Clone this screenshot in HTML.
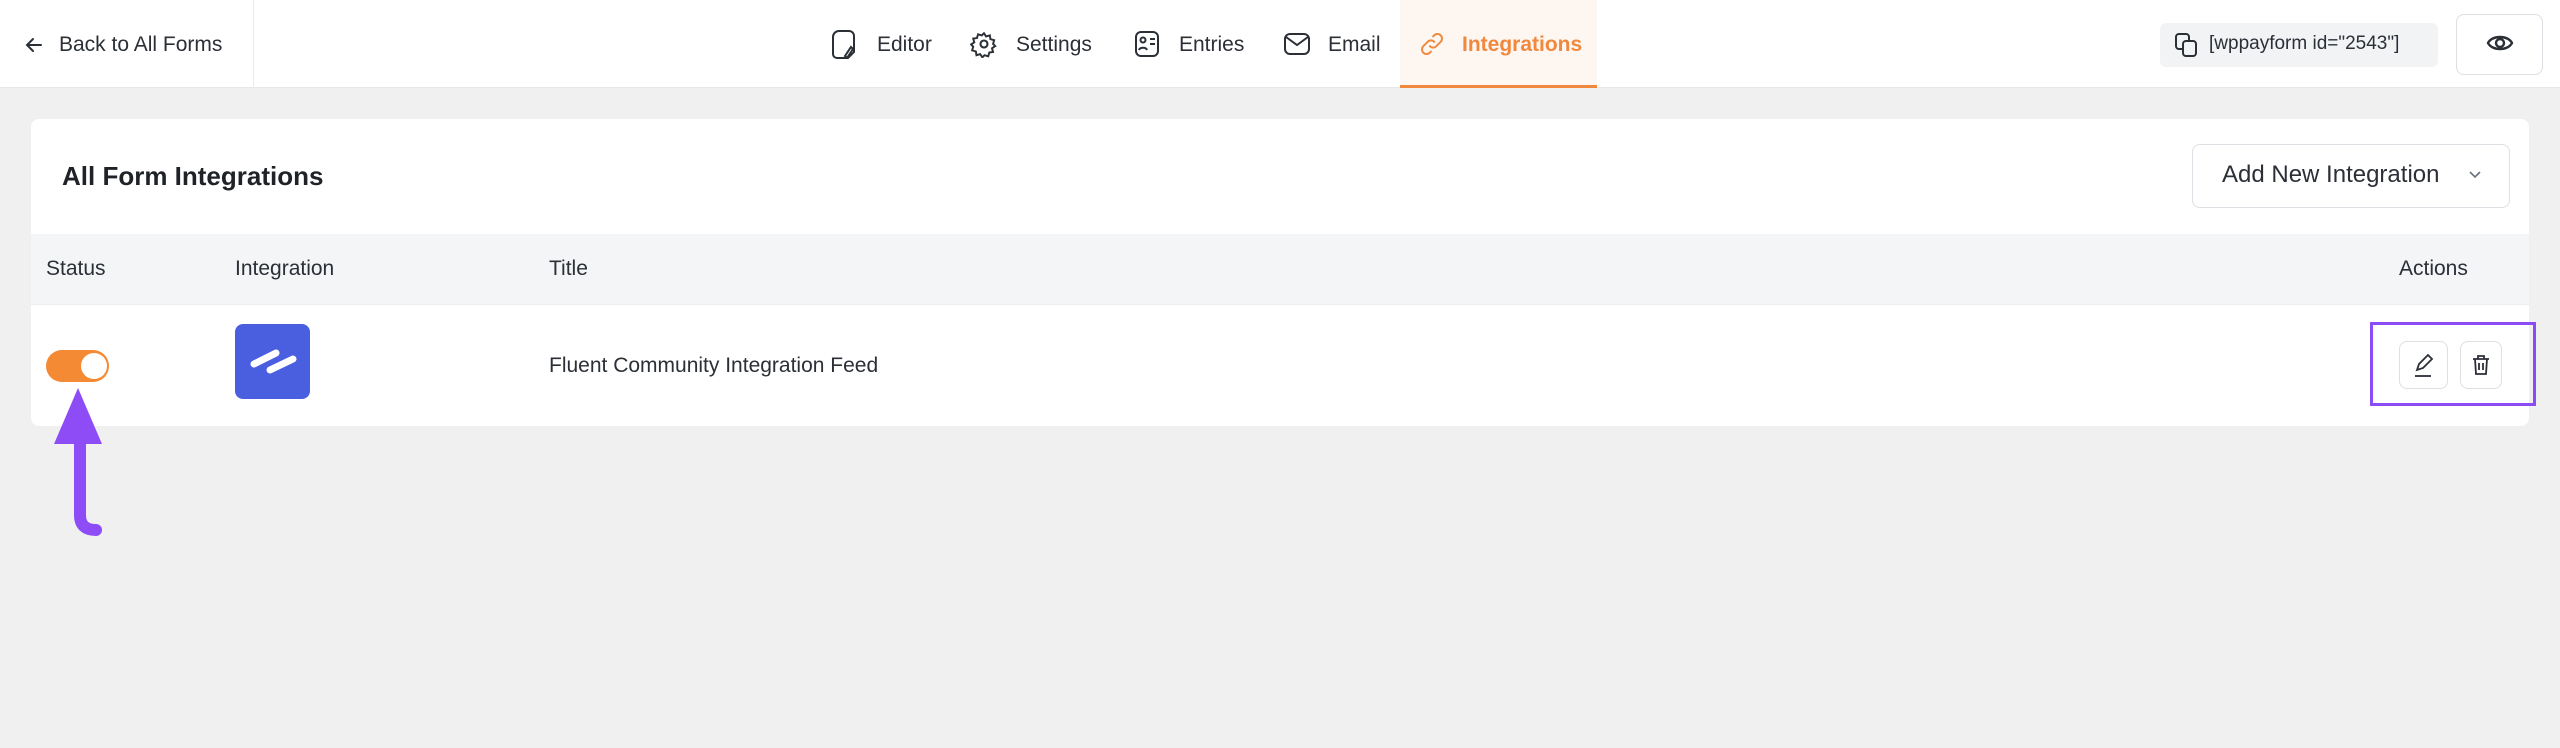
<!DOCTYPE html>
<html><head><meta charset="utf-8"><style>
*{margin:0;padding:0;box-sizing:border-box}
body{width:2560px;height:748px;background:#f0f0f1;font-family:"Liberation Sans",sans-serif;color:#1f2328;position:relative;overflow:hidden}
.abs{position:absolute}
.hdr{left:0;top:0;width:2560px;height:88px;background:#fff;border-bottom:1px solid #e8e8e8}
.t{font-size:21px;color:#2b2f36;white-space:nowrap}
svg{position:absolute}
</style></head><body>
<div class="abs hdr"></div>
<div class="abs" style="left:253px;top:0;width:1px;height:88px;background:#ececec"></div>
<svg style="left:24px;top:35px" width="20" height="20" viewBox="0 0 20 20" fill="none" stroke="#2b2f36" stroke-width="2" stroke-linecap="round"><path d="M17 10H3M9 4L3 10L9 16"/></svg>
<div class="abs t" style="left:59px;top:33px">Back to All Forms</div>

<svg style="left:831px;top:29px" width="26" height="30" viewBox="0 0 26 30" fill="none" stroke="#2b2f36" stroke-width="2"><path d="M8 2h10a5 5 0 0 1 5 5v16l-6 6H6a4 4 0 0 1-4-4V8a6 6 0 0 1 6-6z"/><path d="M14 27l6-9 2 2-6 9z"/></svg>
<div class="abs t" style="left:877px;top:33px">Editor</div>
<svg style="left:970px;top:30px" width="28" height="28" viewBox="0 0 24 24" fill="none" stroke="#2b2f36" stroke-width="1.8"><circle cx="12" cy="12" r="3"/><path d="M12 2l2 3 3.5-1 .5 3.5 3.5 1-1 3.5 2 2-3 2 1 3.5-3.5.5-1 3.5-3.5-1-2 2-2-3-3.5 1-.5-3.5-3.5-1 1-3.5-2-2 3-2-1-3.5 3.5-.5 1-3.5 3.5 1z" transform="scale(.92) translate(1,1)"/></svg>
<div class="abs t" style="left:1016px;top:33px">Settings</div>
<svg style="left:1134px;top:30px" width="26" height="28" viewBox="0 0 26 28" fill="none" stroke="#2b2f36" stroke-width="2"><rect x="2" y="2" width="22" height="24" rx="5"/><circle cx="9" cy="10" r="2.5"/><path d="M5 20c1-3 7-3 8 0M16 9h5M16 14h5"/></svg>
<div class="abs t" style="left:1179px;top:33px">Entries</div>
<svg style="left:1283px;top:32px" width="28" height="24" viewBox="0 0 28 24" fill="none" stroke="#2b2f36" stroke-width="2"><rect x="2" y="2" width="24" height="20" rx="5"/><path d="M3 5l11 8 11-8"/></svg>
<div class="abs t" style="left:1328px;top:33px">Email</div>
<div class="abs" style="left:1400px;top:0;width:197px;height:88px;background:#fef6f0;border-bottom:3px solid #f0883e"></div>
<svg style="left:1419px;top:30px" width="26" height="28" viewBox="0 0 24 24" fill="none" stroke="#f0883e" stroke-width="1.8" stroke-linecap="round"><path d="M10 14a4 4 0 0 0 6 0l4-4a4 4 0 0 0-6-6l-1 1"/><path d="M14 10a4 4 0 0 0-6 0l-4 4a4 4 0 0 0 6 6l1-1"/></svg>
<div class="abs t" style="left:1462px;top:33px;color:#f0883e;font-weight:bold">Integrations</div>

<div class="abs" style="left:2160px;top:23px;width:278px;height:44px;background:#f2f3f5;border-radius:6px"></div>
<svg style="left:2174px;top:32px" width="24" height="26" viewBox="0 0 24 26" fill="none" stroke="#2b2f36" stroke-width="2"><rect x="2" y="2" width="13" height="15" rx="3"/><rect x="9" y="9" width="13" height="15" rx="3" fill="#f2f3f5"/></svg>
<div class="abs" style="left:2209px;top:33px;font-size:19px;color:#2b2f36">[wppayform id="2543"]</div>
<div class="abs" style="left:2456px;top:14px;width:87px;height:61px;border:1px solid #dcdfe3;border-radius:8px;background:#fff"></div>
<svg style="left:2486px;top:30px" width="28" height="26" viewBox="0 0 28 26" fill="none" stroke="#2b2f36" stroke-width="2.4"><path d="M2 13C6 5 22 5 26 13C22 21 6 21 2 13z"/><circle cx="14" cy="13" r="4"/></svg>

<div class="abs" style="left:31px;top:119px;width:2498px;height:307px;background:#fff;border-radius:8px;overflow:hidden">
 <div class="abs" style="left:0;top:115px;width:2498px;height:71px;background:#f4f5f7;border-bottom:1px solid #eceef0"></div>
</div>
<div class="abs" style="left:62px;top:161px;font-size:26px;font-weight:bold;color:#1f2328">All Form Integrations</div>
<div class="abs" style="left:2192px;top:144px;width:318px;height:64px;border:1px solid #dcdfe3;border-radius:8px"></div>
<div class="abs" style="left:2222px;top:161px;font-size:24px;color:#2b2f36">Add New Integration</div>
<svg style="left:2468px;top:170px" width="14" height="10" viewBox="0 0 14 10" fill="none" stroke="#6b7280" stroke-width="1.6"><path d="M2 2l5 5 5-5"/></svg>

<div class="abs t" style="left:46px;top:257px;font-size:21px">Status</div>
<div class="abs t" style="left:235px;top:257px">Integration</div>
<div class="abs t" style="left:549px;top:257px">Title</div>
<div class="abs t" style="left:2399px;top:257px">Actions</div>

<div class="abs" style="left:46px;top:350px;width:63px;height:32px;border-radius:16px;background:#f58a34"></div>
<div class="abs" style="left:81px;top:353px;width:26px;height:26px;border-radius:50%;background:#fff"></div>
<div class="abs" style="left:235px;top:324px;width:75px;height:75px;border-radius:8px;background:#4a5fdf"></div>
<svg style="left:235px;top:324px" width="75" height="75" viewBox="0 0 75 75"><path d="M19 40L41 29" stroke="#fff" stroke-width="7" stroke-linecap="round"/><path d="M35 46L58 35" stroke="#fff" stroke-width="7" stroke-linecap="round"/></svg>
<div class="abs t" style="left:549px;top:354px">Fluent Community Integration Feed</div>

<div class="abs" style="left:2370px;top:322px;width:166px;height:84px;border:3px solid #8b4cf5"></div>
<div class="abs" style="left:2399px;top:341px;width:49px;height:48px;border:1px solid #dcdfe3;border-radius:8px"></div>
<svg style="left:2411px;top:352px" width="26" height="26" viewBox="0 0 26 26" fill="none" stroke="#2b2f36" stroke-width="1.8"><path d="M6 18l2-6 9-9 4 4-9 9z"/><path d="M4 24h16"/></svg>
<div class="abs" style="left:2460px;top:341px;width:42px;height:48px;border:1px solid #dcdfe3;border-radius:8px"></div>
<svg style="left:2469px;top:353px" width="24" height="24" viewBox="0 0 24 24" fill="none" stroke="#2b2f36" stroke-width="1.8"><path d="M4 6h16M9 6V3h6v3M6 6l1 15h10l1-15M10 10v7M14 10v7"/></svg>

<svg style="left:0;top:380px" width="140" height="170" viewBox="0 0 140 170"><path d="M54 64L78 8L102 64z" fill="#8e4cf7"/><path d="M80 60V135Q80 150 96 150" fill="none" stroke="#8e4cf7" stroke-width="12" stroke-linecap="round"/></svg>
</body></html>
